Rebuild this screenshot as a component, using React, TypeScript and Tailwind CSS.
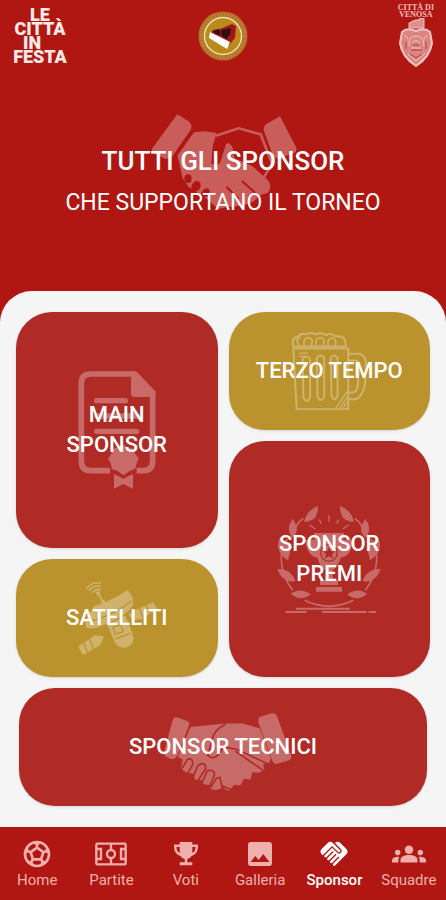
import { MdGroups, MdHandshake, MdImage, MdSportsSoccer } from 'react-icons/md'
import type { ReactNode } from 'react'

function HeaderHandshake() {
  return (
    <svg viewBox="290 40 450 290" className="w-[150px] opacity-30" fill="#fff" aria-hidden="true">
      <path d="M378 44 L414 66 Q424 76 418 90 L366 166 Q356 182 338 176 L306 160 Q298 152 304 144 Z" />
      <path d="M686 50 L646 72 Q634 80 638 94 L662 160 Q668 178 684 176 L728 160 Q738 156 734 142 Z" />
      <path d="M428 98 L460 95 L496 100 L484 140 L480 190 Q492 204 506 190 L524 134 Q536 124 544 146 L550 176 L604 200 L652 244 Q664 266 648 280 L628 286 L606 306 L570 318 L530 322 L500 328 L470 300 L440 280 L412 262 L394 236 L384 190 L378 168 Z" />
      <path d="M494 108 L562 86 L628 104 L646 150 L662 192 L636 236" fill="none" stroke="#fff" strokeWidth="8" strokeLinejoin="round" />
      <g fill="#b01712">
        <ellipse cx="410" cy="237" rx="11" ry="13" />
        <ellipse cx="434" cy="260" rx="13" ry="17" transform="rotate(30 434 260)" />
        <ellipse cx="462" cy="280" rx="11" ry="16" transform="rotate(40 462 280)" />
      </g>
      <path d="M526 262 L562 298 M572 244 L612 280" fill="none" stroke="#b01712" strokeWidth="6" />
    </svg>
  )
}

function CertificateArt() {
  return (
    <svg viewBox="208 210 234 358" className="w-[78px] opacity-30" fill="#fff" aria-hidden="true">
      <path d="M304 512 H246 Q218 512 218 484 V250 Q218 222 246 222 H376 L432 280 V484 Q432 512 404 512 H384" fill="none" stroke="#fff" strokeWidth="17" />
      <path d="M367 215 H384 L440 274 V291 H378 Q367 291 367 280 Z" />
      <path d="M264 302 H350 M264 348 H386 M264 394 H384" stroke="#fff" strokeWidth="16" strokeLinecap="round" />
      <path d="M344 434 L358 442 L374 446 L378 460 L390 474 L384 490 L380 506 L364 512 L344 526 L326 512 L310 508 L306 490 L298 476 L308 462 L312 446 L328 442 Z" />
      <path d="M316 522 L344 536 L373 522 V566 L344 552 L316 566 Z" />
    </svg>
  )
}

function BeerArt() {
  return (
    <svg viewBox="215 95 227 235" className="w-[76px] opacity-30" fill="none" stroke="#fff" strokeWidth="6" strokeLinejoin="round" strokeLinecap="round" aria-hidden="true">
      <path d="M222 138 Q214 112 236 110 Q244 96 260 102 Q276 94 290 102 Q306 94 320 104 Q338 96 348 108 Q382 104 378 138 Z" />
      <path d="M238 134 Q226 116 242 112 M254 134 Q250 114 268 112 Q284 116 276 134 M290 132 Q286 112 304 112 Q318 116 312 134 M326 134 Q322 116 338 112 Q352 116 348 134" strokeWidth="5" />
      <path d="M222 144 H386 V326 H232 Z" />
      <path d="M386 160 H420 Q440 166 439 196 L436 250 Q428 292 406 296 H386 M386 180 H408 Q420 182 418 210 L414 260 Q410 274 398 276 H386" />
      <path d="M250 176 Q260 160 272 176 V290 Q262 312 252 290 Z M292 172 Q302 158 314 172 V288 Q304 308 294 288 Z M334 172 Q344 158 354 172 V286 Q344 306 336 286 Z" />
      <path d="M240 158 H264 M240 168 H252 M382 274 L350 320 M382 290 L362 320 M382 304 L372 320" strokeWidth="4" />
    </svg>
  )
}

function AwardArt() {
  const half = (
    <>
      <path d="M298 195 Q298 228 280 237 Q266 244 257 242 Q262 210 298 195 Z" />
      <path d="M222 234 Q240 258 232 276 Q228 286 220 290 Q200 262 222 234 Z" />
      <path d="M184 290 Q214 304 214 332 L208 358 Q178 340 178 312 Q178 300 184 290 Z" />
      <path d="M176 384 Q216 382 230 420 Q194 430 176 384 Z" />
      <path d="M216 458 Q246 438 276 460 Q248 484 216 458 Z" />
      <path d="M254 232 Q232 248 228 268 M206 294 Q186 320 188 360 Q192 410 222 448 M258 478 Q288 494 331 496" fill="none" stroke="#fff" strokeWidth="5" />
      <path d="M272 252 L290 264 M302 236 L308 248" stroke="#fff" strokeWidth="4" />
    </>
  )
  return (
    <svg viewBox="175 192 312 326" className="w-[104px] opacity-30" fill="#fff" aria-hidden="true">
      {half}
      <g transform="translate(662 0) scale(-1 1)">{half}</g>
      <path d="M331 222 V242" stroke="#fff" strokeWidth="4" />
      <path d="M286 276 H376 L374 296 H402 Q400 344 366 350 Q358 378 342 388 V418 H358 V432 H304 V418 H320 V388 Q304 378 296 350 Q264 344 260 296 H288 Z" />
      <path d="M292 438 H370 V452 H292 Z M232 500 H394 V506 H232 Z M200 510 H264 V516 H200 Z M310 510 H444 V516 H310 Z M450 510 H472 V516 H450 Z" />
      <circle cx="331" cy="336" r="25" fill="none" stroke="#b02b26" strokeWidth="4" />
      <path d="M331 318 L336 330 L350 331 L340 340 L344 353 L331 346 L318 353 L322 340 L312 331 L326 330 Z" fill="#b02b26" />
    </svg>
  )
}

function SatelliteArt() {
  return (
    <svg viewBox="198 90 242 225" className="w-20 opacity-30" fill="#fff" aria-hidden="true">
      <g fill="none" stroke="#fff" strokeWidth="5" strokeLinecap="round">
        <path d="M228 112 Q242 92 268 96 M236 118 Q248 102 268 106 M246 124 Q256 112 268 116" />
        <path d="M262 128 L276 152" />
      </g>
      <circle cx="262" cy="127" r="6" />
      <circle cx="277" cy="153" r="6" />
      <path d="M350 118 Q374 136 366 166 Q344 196 306 210 Q264 234 230 234 Q220 222 226 204 L250 166 Q300 152 350 118 Z" />
      <path d="M290 224 L344 194 L366 250 Q376 280 350 290 Q326 298 312 274 Z" />
      <path d="M202 288 L252 254 L280 258 L268 284 L216 314 Z" />
      <path d="M354 192 L368 180 L428 154 L440 174 L394 206 L364 208 Z" />
      <g fill="none" stroke="#bb932e" strokeWidth="4">
        <path d="M218 278 L230 306 M236 266 L248 296 M386 172 L398 202 M406 162 L420 188 M314 266 L360 248 M306 230 L330 222 L338 244 L314 250 Z M230 214 Q300 200 364 150" />
      </g>
    </svg>
  )
}

function HandshakeArt() {
  return (
    <svg viewBox="425 66 433 264" className="w-36 opacity-30" fill="#fff" aria-hidden="true">
      <path d="M500 108 L534 120 Q544 126 538 136 L506 220 Q498 238 484 234 L468 226 Q460 220 466 208 L490 118 Q494 108 500 108 Z" />
      <path d="M752 108 L788 97 Q800 96 804 106 L846 222 Q850 234 840 238 L804 249 Q794 250 790 240 L748 124 Q746 112 752 108 Z" />
      <path d="M544 138 L648 128 L700 128 L752 142 L786 234 L778 248 L762 250 L766 268 L748 276 L730 274 L724 296 L704 294 L694 314 L676 312 L658 330 L640 320 Q616 336 602 320 L604 312 Q582 316 578 298 Q552 302 552 278 Q520 278 516 258 L520 236 L506 228 Z" />
      <g fill="none" stroke="#b02b26" strokeWidth="5" strokeLinecap="round">
        <path d="M648 130 Q612 148 608 180 L596 224 Q616 240 632 216 L644 198 L684 206 L778 250" />
        <path d="M520 260 L534 236 Q552 228 550 252 L536 276 M552 288 L566 254 Q588 240 590 262 L566 300 M580 302 L594 270 Q616 264 616 282 L602 314 M606 318 L622 292 L632 290 L640 322 M680 212 L762 268 M636 314 L660 324" />
      </g>
    </svg>
  )
}

function FieldIcon() {
  return (
    <svg viewBox="288 64 96 70" className="h-6 w-8" fill="none" stroke="currentColor" strokeWidth="7" aria-hidden="true">
      <rect x="292" y="68" width="88" height="62" rx="3" />
      <circle cx="336" cy="99" r="12" />
      <path d="M336 68 V87 M336 111 V130 M292 84 H306 V114 H292 M380 84 H366 V114 H380" />
    </svg>
  )
}

function CupIcon() {
  return (
    <svg viewBox="522 62 76 76" className="h-6 w-6" fill="currentColor" aria-hidden="true">
      <path d="M540 62 H580 V70 H598 V80 Q596 100 578 106 Q572 114 564 116 V126 H580 V136 H540 V126 H556 V116 Q548 114 542 106 Q524 100 522 80 V70 H540 Z M540 78 H530 Q530 92 540 97 Z M580 78 V97 Q590 92 590 78 Z" fillRule="evenodd" />
    </svg>
  )
}

function Medallion() {
  return (
    <svg viewBox="0 0 50 50" className="h-[50px] w-[50px]" aria-label="Stemma del torneo" role="img">
      <circle cx="25" cy="25" r="24.5" fill="#b3722a" />
      <circle cx="25" cy="25" r="21.5" fill="none" stroke="#bd8134" strokeWidth="3" strokeDasharray="2 1.5" />
      <circle cx="25" cy="25" r="18.5" fill="#b98a1c" stroke="#f5e3b4" strokeWidth="1.4" />
      <path d="M13 22 L15 19 L22 18 L34 13 L38 15 L37 27 L31 34 Z" fill="#a51418" />
      <path d="M15 20 L21 18 L23 24 L18 23 Z M23 19 L33 17 L32 24 L28 28 L24 25 Z" fill="#2a1012" />
      <path d="M12 21 L32 31 L29 38 L11 27 Z" fill="#fff" />
    </svg>
  )
}

function Crest() {
  return (
    <svg viewBox="0 0 34 50" className="h-[50px] w-[34px]" fill="none" stroke="#f1c5c1" aria-hidden="true">
      <path d="M10 10 V5 L13 4 V3 L16 3 V2 L20 2 V1 L25 0 V10 Z" fill="#dc918d" strokeWidth="1" />
      <path d="M3 14 Q8 9 17 13 Q26 9 31 14 L33 25 Q31 39 17 48 Q3 39 1 25 Z" fill="#d98682" strokeWidth="2" />
      <path d="M10 28 Q9 18 17 18 Q25 18 25 28 M12 30 H22 M13 25 L17 22 L21 25 M9 36 L17 43 L26 35 M6 17 L9 21 M28 17 L25 21" strokeWidth="1" />
      <path d="M12 32 H23 M14 27 H20 M11 36 L17 40 L23 36 M7 24 V31 M27 24 V31" stroke="#bb3833" strokeWidth="1" />
    </svg>
  )
}

type TileProps = { label: ReactNode; art: ReactNode; className: string }

function Tile({ label, art, className }: TileProps) {
  return (
    <button type="button" className={`relative flex items-center justify-center rounded-[36px] text-[22px] leading-[30px] font-medium text-white shadow-sm ${className}`}>
      <span className="absolute inset-0 flex items-center justify-center">{art}</span>
      <span className="relative">{label}</span>
    </button>
  )
}

const navItems = [
  { name: 'Home', icon: <MdSportsSoccer size={32} /> },
  { name: 'Partite', icon: <FieldIcon /> },
  { name: 'Voti', icon: <CupIcon /> },
  { name: 'Galleria', icon: <MdImage size={32} /> },
  { name: 'Sponsor', icon: <MdHandshake size={32} />, active: true },
  { name: 'Squadre', icon: <MdGroups size={34} /> },
]

export default function App() {
  return (
    <div className="flex min-h-screen flex-col bg-[#b01712] font-['Roboto',sans-serif] text-white">
      <header className="grid grid-cols-3 items-start px-3">
        <p className="w-14 pt-2 text-center text-[18px] leading-[14px] font-black text-[#fbe9e7]">
          LE
          <br />
          CITTÀ
          <br />
          <span className="pr-4">IN</span>
          <br />
          FESTA
        </p>
        <div className="flex justify-center pt-[11px]">
          <Medallion />
        </div>
        <div className="flex flex-col items-center justify-self-end pt-1 text-center font-['Liberation_Serif',serif] text-[8px] leading-[7px] font-bold text-[#eec0bd]">
          <p>
            CITTÀ DI
            <br />
            VENOSA
          </p>
          <Crest />
        </div>
      </header>

      <section className="relative mt-[45px] flex h-[122px] flex-col items-center text-center">
        <div className="absolute inset-x-0 top-0 flex justify-center">
          <HeaderHandshake />
        </div>
        <h1 className="relative pt-8 text-[26px] leading-8 font-medium">TUTTI GLI SPONSOR</h1>
        <p className="relative pt-[10px] text-[23px] leading-8">CHE SUPPORTANO IL TORNEO</p>
      </section>

      <main className="mt-14 flex flex-1 flex-col gap-[11px] rounded-t-[32px] bg-[#f5f5f5] px-4 py-[21px]">
        <div className="grid grid-cols-2 gap-[11px]">
          <div className="flex flex-col gap-[11px]">
            <Tile className="h-[236px] bg-[#b02b26]" art={<CertificateArt />} label={<>MAIN<br />SPONSOR</>} />
            <Tile className="h-[118px] bg-[#bb932e]" art={<SatelliteArt />} label="SATELLITI" />
          </div>
          <div className="flex flex-col gap-[11px]">
            <Tile className="h-[118px] bg-[#bb932e]" art={<BeerArt />} label="TERZO TEMPO" />
            <Tile className="h-[236px] bg-[#b02b26]" art={<AwardArt />} label={<>SPONSOR<br />PREMI</>} />
          </div>
        </div>
        <Tile className="mx-[3px] h-[118px] bg-[#b02b26]" art={<HandshakeArt />} label="SPONSOR TECNICI" />
      </main>

      <nav className="sticky bottom-0 grid h-[74px] grid-cols-6 bg-[#b01712]">
        {navItems.map((item) => (
          <a
            key={item.name}
            href="#"
            aria-current={item.active ? 'page' : undefined}
            className={`flex flex-col items-center pt-[11px] text-[15px] ${item.active ? 'font-medium text-white' : 'text-[#efb0ad]'}`}
          >
            <span className="flex h-8 items-center">{item.icon}</span>
            <span className="leading-5">{item.name}</span>
          </a>
        ))}
      </nav>
    </div>
  )
}
